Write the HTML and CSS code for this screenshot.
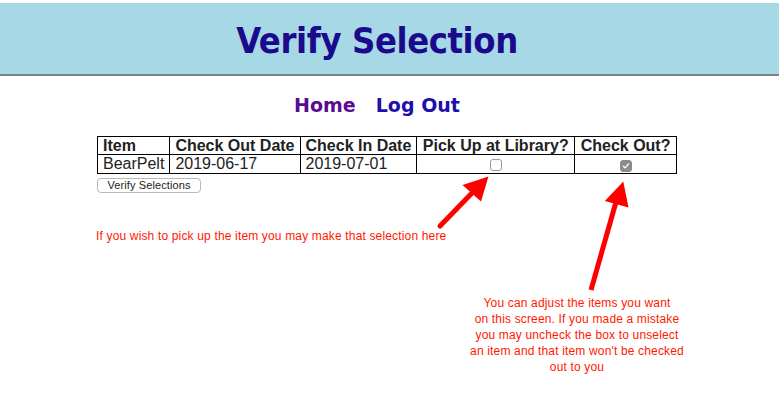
FILE: index.html
```html
<!DOCTYPE html>
<html lang="en">
<head>
<meta charset="utf-8">
<title>Verify Selection</title>
<link rel="stylesheet" href="styles.css">
</head>
<body>
<header class="banner">
  <h1 class="banner-title">Verify Selection</h1>
</header>
<nav class="nav">
  <a class="nav-link visited" href="#">Home</a>
  <a class="nav-link" href="#">Log Out</a>
</nav>
<main class="content">
  <table class="items">
    <thead>
      <tr><th>Item</th><th>Check Out Date</th><th>Check In Date</th><th class="wide">Pick Up at Library?</th><th class="wide">Check Out?</th></tr>
    </thead>
    <tbody>
      <tr>
        <td>BearPelt</td>
        <td>2019-06-17</td>
        <td>2019-07-01</td>
        <td class="center"><span class="checkbox" role="checkbox" aria-checked="false"></span></td>
        <td class="center"><span class="checkbox checked" role="checkbox" aria-checked="true"><svg viewBox="0 0 12 12" width="10" height="10"><path d="M3 6.3 L5 8.3 L9 3.6" fill="none" stroke="#fff" stroke-width="1.6" stroke-linecap="round" stroke-linejoin="round"/></svg></span></td>
      </tr>
    </tbody>
  </table>
  <button class="verify-btn" type="button">Verify Selections</button>
</main>

<p class="note note-pickup">If you wish to pick up the item you may make that selection here</p>
<p class="note note-checkout">You can adjust the items you want<br>on this screen. If you made a mistake<br>you may uncheck the box to unselect<br>an item and that item won't be checked<br>out to you</p>

<svg class="arrows" width="779" height="417" viewBox="0 0 779 417" aria-hidden="true">
  <line x1="440" y1="226" x2="473" y2="192" stroke="#ff0000" stroke-width="5" stroke-linecap="round"/>
  <polygon points="488.5,176.5 462.5,185 481,201.5" fill="#ff0000"/>
  <line x1="591" y1="290" x2="616" y2="202" stroke="#ff0000" stroke-width="5" stroke-linecap="butt"/>
  <polygon points="623.3,181.5 604.8,201 628.5,207.5" fill="#ff0000"/>
</svg>
</body>
</html>
```

FILE: styles.css
```css
html, body {
  margin: 0;
  padding: 0;
  background: #ffffff;
}

body {
  position: relative;
  width: 779px;
  height: 417px;
  overflow: hidden;
  font-family: "Liberation Sans", Arial, sans-serif;
}

.banner {
  box-sizing: border-box;
  margin-top: 3px;
  height: 73px;
  padding-top: 17px;
  background: #a7d8e6;
  border-bottom: 2px solid #808080;
}

.banner-title {
  margin: 0;
  padding-right: 25px;
  text-align: center;
  font-family: "DejaVu Sans Condensed", "DejaVu Sans", sans-serif;
  font-stretch: condensed;
  font-weight: bold;
  font-size: 36px;
  line-height: 42px;
  letter-spacing: -0.4px;
  color: #1c0a8c;
}

.nav {
  display: flex;
  justify-content: center;
  gap: 20px;
  margin-top: 18px;
  padding-right: 25px;
  font-family: "DejaVu Sans", Verdana, sans-serif;
  font-weight: bold;
  font-size: 19px;
  line-height: 22px;
}

.nav-link {
  color: #1e0fae;
  text-decoration: none;
}

.nav-link.visited {
  color: #5b0a92;
}

.content {
  margin-top: 20px;
  padding-left: 97px;
}

.items {
  border-collapse: collapse;
  font-size: 16px;
  color: #222;
}

.items th,
.items td {
  border: 1px solid #000;
  padding: 0 5px;
  text-align: left;
  white-space: nowrap;
}

.items th.wide {
  padding: 0 5.5px;
}

.items th {
  line-height: 17px;
  font-weight: bold;
}

.items td {
  line-height: 18px;
}

.items td.center {
  text-align: center;
}

.checkbox {
  box-sizing: border-box;
  display: inline-flex;
  align-items: center;
  justify-content: center;
  width: 12px;
  height: 12px;
  border: 1px solid #9a9a9a;
  border-radius: 3px;
  background: #ffffff;
  vertical-align: -2px;
}

.checkbox.checked {
  background: #8c8c8c;
  border-color: #8c8c8c;
}

.checkbox svg {
  display: block;
}

.verify-btn {
  display: block;
  margin: 4px 0 0 0;
  box-sizing: border-box;
  width: 104px;
  height: 15px;
  padding: 0;
  font-family: "Liberation Sans", Arial, sans-serif;
  font-size: 11px;
  line-height: 13px;
  letter-spacing: 0.1px;
  color: #222;
  background: #ffffff;
  border: 1px solid #b8b8b8;
  border-radius: 4px;
}

.note {
  position: absolute;
  margin: 0;
  color: #ff1a00;
  font-size: 12px;
  letter-spacing: 0.16px;
}

.note-pickup {
  left: 96px;
  top: 229px;
  line-height: 14px;
}

.note-checkout {
  left: 457px;
  top: 295px;
  width: 240px;
  text-align: center;
  line-height: 16px;
}

.arrows {
  position: absolute;
  left: 0;
  top: 0;
}
```
